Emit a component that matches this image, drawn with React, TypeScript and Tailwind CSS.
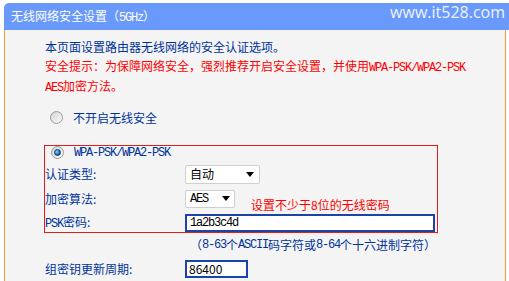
import React from 'react';

const Mono = ({ children }: { children: React.ReactNode }) => (
  <span className="font-['Liberation_Mono',monospace] text-[12px] tracking-[-1.2px]">{children}</span>
);

function Radio({ checked }: { checked?: boolean }) {
  return (
    <span className="flex h-[13px] w-[13px] shrink-0 items-center justify-center rounded-full border border-[#9a9a9a] bg-gradient-to-br from-[#d4d4d4] to-[#fbfbfb]">
      {checked && (
        <span className="h-[7px] w-[7px] rounded-full border border-[#0b3d6e] bg-[radial-gradient(circle_at_35%_35%,#9ad6ff,#1a6bb8_60%,#0b3d6e)]" />
      )}
    </span>
  );
}

function Arrow() {
  return (
    <svg width="8" height="5" viewBox="0 0 8 5">
      <path d="M0 0h8L4 5z" fill="#000" />
    </svg>
  );
}

const App: React.FC = () => {
  return (
    <div className="min-h-[281px] bg-white pl-[4px] pt-[3px] font-['Noto_Sans_CJK_SC',sans-serif] text-[12px]">
      {/* title bar */}
      <div className="relative flex h-[27px] items-center rounded-tl-[5px] bg-[#6999fb] pl-[7px] text-white">
        <span className="whitespace-nowrap leading-none">
          无线网络安全设置（<Mono>5GHz</Mono>）
        </span>
        <span className="absolute right-[4px] top-[1px] font-['Open_Sans',sans-serif] text-[16px] leading-none text-[#eef3ff]">
          www.it528.com
        </span>
      </div>

      <div className="min-h-[251px] w-[502px] border-x border-[#ff9933] bg-[#f4f4f4] pl-[40px] pt-[8px] text-[#003399]">
        <div className="whitespace-nowrap leading-[18.5px]">
          <p>本页面设置路由器无线网络的安全认证选项。</p>
          <p className="text-[#ff0000]">
            安全提示：为保障网络安全，强烈推荐开启安全设置，并使用<Mono>WPA-PSK/WPA2-PSK</Mono>
          </p>
          <p className="text-[#ff0000]">
            <Mono>AES</Mono>加密方法。
          </p>
        </div>

        <div className="mt-[11px] flex h-[18px] items-center gap-[10px] pl-[5px]">
          <Radio />
          <span className="leading-none">不开启无线安全</span>
        </div>

        {/* WPA-PSK block */}
        <div className="-ml-[1px] mt-[18px] w-[394px] border border-[#e51c1c]">
          <div className="flex h-[14px] items-center gap-[10px] pl-[6px]">
            <Radio checked />
            <Mono>WPA-PSK/WPA2-PSK</Mono>
          </div>

          <div className="mt-[5px] flex h-[19px] items-center">
            <span className="w-[140px] leading-none">认证类型:</span>
            <div className="flex h-[19px] w-[75px] items-center justify-between rounded-[2px] border border-[#cfcfcf] bg-white pl-[4px] pr-[5px] text-black">
              <span className="leading-none">自动</span>
              <Arrow />
            </div>
          </div>

          <div className="mt-[6px] flex h-[18px] items-start">
            <span className="w-[140px] self-center leading-none">加密算法:</span>
            <div className="flex h-[18px] w-[50px] items-center justify-between rounded-[2px] border border-[#cfcfcf] bg-white pl-[4px] pr-[4px] text-black">
              <Mono>AES</Mono>
              <Arrow />
            </div>
            <span className="ml-[16px] mt-[8px] whitespace-nowrap leading-[14px] text-[#ff0000]">
              设置不少于8位的无线密码
            </span>
          </div>

          <div className="mt-[6px] flex h-[18px] items-center">
            <span className="w-[140px] leading-none">
              <Mono>PSK</Mono>密码:
            </span>
            <div className="flex h-[18px] w-[250px] items-center border-2 border-[#1c44a8] bg-white pl-[3px] text-black">
              <Mono>1a2b3c4d</Mono>
            </div>
          </div>
        </div>

        <div className="mt-[3px] flex h-[18px] items-center whitespace-nowrap pl-[145px] leading-none">
          （<Mono>8-63</Mono>个<Mono>ASCII</Mono>码字符或<Mono>8-64</Mono>个十六进制字符）
        </div>

        <div className="mt-[6px] flex h-[18px] items-center">
          <span className="w-[140px] leading-none">组密钥更新周期:</span>
          <div className="flex h-[18px] w-[63px] items-center border-2 border-[#1c44a8] bg-white pl-[2px] text-black">
            <span className="leading-none">86400</span>
          </div>
        </div>
      </div>
    </div>
  );
};

export default App;
